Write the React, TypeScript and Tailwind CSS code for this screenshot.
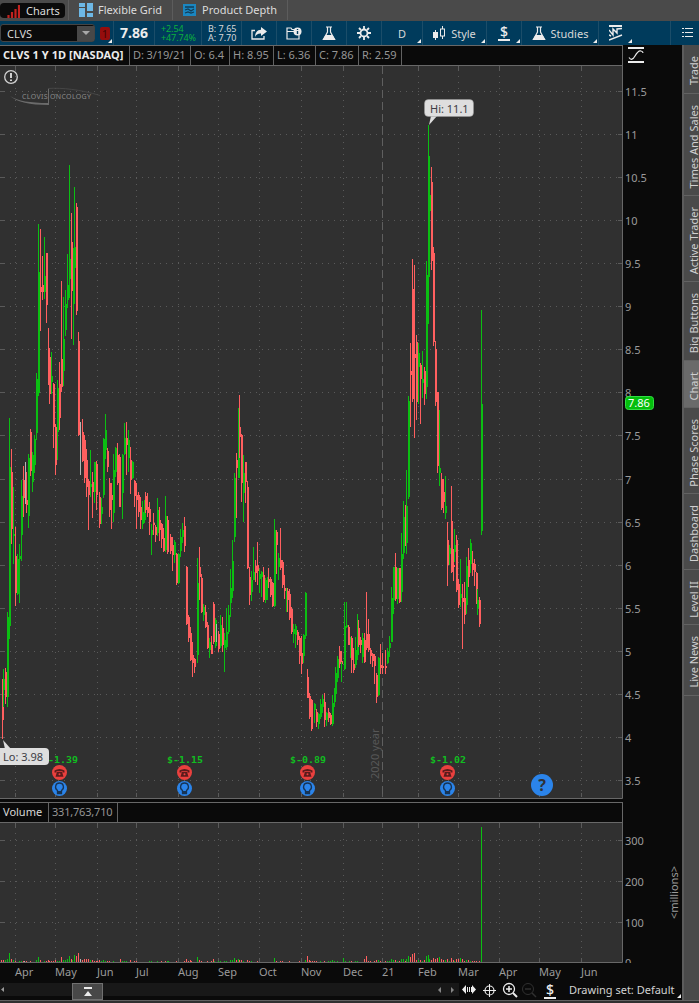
import { ReactNode } from "react"
import clsx from "clsx"

type Candle = {
  x: number
  high: number
  low: number
  top: number
  bottom: number
  color: string
}

const COLORS: Record<string, string> = { u: "#0bbf12", d: "#ff5f5f", n: "#b5b5b5" }

// direction, x, high, low and optionally the body's top and bottom
const CANDLES = `
d 2 679 739 679 720;u 3 669 707 679 690;d 5 668 704 672 697;u 7 612 707 617 697;u 9 418 639 467 626;d 11 449 544 472 529;
u 13 487 564 534 536;d 15 527 606 556 593;u 17 554 595 559 594;u 19 544 603 556 559;u 21 480 561 496 535;d 23 466 517 480 498;
n 25 462 504;d 26 472 513 500 505;u 28 454 528 458 516;d 30 429 476 432 471;u 32 452 492 455 482;u 34 435 473 439 465;
u 36 373 440 379 433;u 38 224 396 272 393;d 40 229 331 287 292;d 42 256 300 285 292;u 44 237 299 276 292;d 46 253 323 253 305;
d 48 328 385 348 384;d 49 348 404 357 394;u 51 352 394 376 382;d 53 383 448 384 427;d 55 424 475 427 465;u 57 380 460 388 432;
d 59 362 430 384 418;d 61 281 392 359 387;u 63 297 386 339 371;u 65 290 336 304 330;u 67 254 308 285 300;u 69 165 298 259 279;
d 71 213 339 242 291;u 73 248 345 250 304;u 74 187 304 247 268;d 76 203 315 207 311;d 78 332 436 341 435;n 80 422 475;
d 82 419 462 432 461;d 84 435 483 440 478;d 86 449 497 460 487;d 88 479 530 481 495;u 90 450 497 484 487;d 92 472 518 482 492;
u 94 462 503 462 492;d 96 461 510 464 495;d 97 473 495;d 99 492 528 497 524;u 101 498 524 507 514;u 103 438 498 439 495;
u 105 414 459 430 450;d 107 448 472 451 467;d 109 478 517 483 510;d 111 483 529 495 500;u 113 454 522 470 513;u 115 447 477 448 472;
d 117 443 485 455 483;d 119 454 492 457 507;u 122 454 519 455 493;u 124 423 455 438 454;d 126 422 475 438 445;u 128 430 472 440 458;
d 130 447 494 460 480;u 132 461 479 462 478;d 134 480 507 481 496;d 136 483 529 495 500;d 138 492 517 495 512;d 140 497 529 507 520;
u 142 501 529 512 524;u 144 500 523 501 520;d 145 492 513 496 510;d 147 493 517 507 513;d 149 502 535 509 522;u 151 524 555 530 535;
d 153 513 535 523 525;d 155 525 542 527 535;u 157 498 536 510 533;d 159 507 541 520 530;d 161 523 548 524 539;d 163 528 552 538 551;
u 165 496 552 516 550;d 167 516 554 520 552;d 170 534 554 537 551;d 172 537 571 545 555;u 174 540 563 542 555;d 176 553 585 554 583;
u 178 553 584 554 583;u 180 529 557 537 551;u 182 523 543 530 537;d 184 517 552 526 546;d 186 566 625 567 624;d 188 615 642 617 638;
d 190 627 661 633 660;d 192 642 677 655 663;d 194 658 673 659 667;u 197 558 663 583 655;d 199 547 600 567 577;d 201 574 613 578 612;
u 203 604 621 607 615;d 205 605 628 612 627;d 207 622 649 625 648;u 209 638 658 642 650;d 211 636 654 645 654;d 213 602 644 604 642;
u 215 618 648 620 646;n 216 624 642;d 218 631 652 634 649;u 220 615 648 625 646;d 222 617 652 628 645;u 224 633 672 640 648;
u 226 608 650 632 647;u 228 605 634 615 632;u 230 569 617 588 603;u 232 540 598 561 591;u 234 473 542 478 537;d 236 453 518 460 468;
u 238 408 478 408 478;d 239 395 458 427 437;d 241 434 502 435 483;u 243 455 522 473 493;d 245 462 503 462 482;d 247 481 569 487 568;
d 249 567 605 577 595;u 251 571 601 580 592;u 253 547 580 572 580;d 255 560 582 566 573;d 257 542 585 565 571;u 259 569 593 574 579;
u 261 571 597 572 577;d 263 567 602 575 600;u 265 578 603 580 600;u 267 577 600 578 582;d 268 568 588 579 582;d 270 577 597 579 595;
d 272 582 607 583 606;u 274 519 607 530 606;d 276 530 574 532 545;u 278 553 580 558 567;d 280 528 570 560 568;d 282 560 588 562 585;
d 284 575 599 588 591;u 286 588 612 589 610;d 287 588 612 591 600;d 289 589 620 594 618;d 291 607 634 609 632;u 293 624 643 629 634;
u 295 624 648 626 635;d 297 630 645 632 640;d 299 636 664 638 656;d 301 636 674 653 664;u 303 634 663 635 656;u 305 592 639 593 636;
d 307 669 698 677 698;d 309 693 719 696 717;d 311 699 731 700 729;u 314 703 723 704 710;d 316 709 727 712 722;u 318 713 729 714 724;
u 320 699 719 704 717;u 322 695 713 699 707;d 324 693 727 702 720;u 326 712 726 713 720;d 328 708 722 712 718;d 330 713 725 715 724;
u 332 695 726 703 724;u 334 688 707 692 702;u 335 667 699 673 694;u 337 656 682 659 678;d 339 646 668 651 664;d 341 651 673 661 664;
u 341 662 682;u 344 602 670 626 669;u 346 602 628 625 627;d 348 625 638 627 645;u 350 637 658 646 650;d 351 636 673 638 660;
d 353 648 673 664 670;u 355 637 668 650 665;u 357 614 660 621 655;d 358 620 647 628 645;d 360 637 653 640 645;u 362 633 663 638 657;
d 364 633 663 640 662;d 366 592 650 634 648;d 368 619 652 634 650;d 370 648 664 650 656;d 372 653 667 654 661;d 374 654 684 656 666;
d 376 673 703 675 697;u 378 657 696 658 695;d 380 644 674 665 668;d 382 653 674 666 668;d 385 650 674 666 668;u 387 648 664 652 663;
u 389 636 657 643 648;u 391 587 642 598 642;u 393 567 614 567 600;d 395 553 601 567 599;u 397 568 604 568 599;d 399 568 603 568 602;
u 401 533 602 554 592;u 403 501 559 517 553;d 405 505 546 510 540;u 406 470 554 506 543;u 408 396 499 401 497;d 410 343 427 371 375;
d 412 259 402 289 399;d 414 265 438 354 358;d 416 335 420 342 402;u 418 343 404 353 367;d 420 363 424 365 379;u 422 351 398 379 383;
d 424 367 405 371 394;u 426 261 399 275 387;u 428 125 324 156 277;u 429 156 277 195 211;d 431 167 270 182 261;d 433 247 346 253 342;
d 435 341 406 349 402;d 437 392 473 392 466;u 439 410 486 468 473;d 441 473 510 479 508;d 443 479 513 492 502;u 445 476 519 506 513;
d 447 522 586 540 565;u 449 545 565 548 554;d 451 486 573 521 572;d 453 549 581 565 567;u 454 529 562 545 552;d 456 535 592 540 590;
d 458 579 608 584 605;u 460 559 607 594 598;d 462 584 649 598 602;d 464 582 624 598 615;u 466 557 614 566 605;d 468 548 587 560 577;
u 470 539 573 543 564;d 472 551 576 563 570;d 474 559 586 564 572;d 476 572 604 573 604;u 477 589 615 600 608;d 479 597 627 600 624;
u 481 310 535 404 531`

const VOLUME = `d 1 2;d 3 2;u 5 2;u 7 3;u 9 9;d 11 3;u 13 2;d 15 1;u 19 1;u 21 1;d 23 1;n 24 1;d 26 1;d 30 1;u 36 2;u 38 5;d 40 2;u 44 1;d 46 1;d 48 2;d 49 1;d 51 1;d 53 1;d 55 2;
u 57 1;u 59 1;d 61 5;u 63 2;u 65 2;u 67 3;u 69 6;d 71 3;u 72 2;u 74 7;d 76 6;d 78 9;n 80 3;d 82 2;d 84 3;d 86 3;d 88 3;u 90 2;d 92 2;d 94 1;d 96 1;d 97 1;d 99 2;u 101 1;u 103 2;u 105 1;d 107 1;d 109 1;u 113 1;
d 120 3;u 122 1;u 124 1;u 126 1;d 130 2;d 134 1;d 136 1;u 149 1;u 151 1;u 157 1;d 161 1;d 165 1;u 167 1;u 168 1;d 176 1;d 184 1;d 186 3;d 188 1;d 190 2;d 191 1;u 197 5;d 199 2;d 201 1;d 207 1;d 211 1;d 213 3;u 214 1;u 218 1;
u 220 1;u 224 1;u 226 1;u 230 2;u 232 2;u 234 4;d 236 2;u 238 3;d 239 2;d 241 2;u 243 1;d 247 2;d 249 1;u 251 1;d 257 1;u 274 4;d 276 1;d 280 1;d 282 1;d 289 1;d 299 1;u 305 2;d 307 6;d 309 2;d 310 1;d 312 1;d 314 1;d 316 1;u 320 1;d 324 1;u 328 1;u 330 1;u 332 2;u 334 1;u 337 1;u 343 4;u 345 1;u 349 1;
d 351 1;u 355 1;u 357 1;d 364 3;d 366 6;d 368 1;d 370 1;d 374 1;d 376 2;u 378 2;d 380 1;d 385 1;u 387 1;u 389 1;u 391 3;u 393 2;d 395 2;u 397 1;d 399 1;u 401 3;u 403 3;d 405 1;u 406 3;u 408 6;d 410 5;d 412 8;d 414 9;d 416 2;u 418 2;d 420 2;u 422 1;d 424 2;u 426 6;u 428 7;u 429 3;
d 431 2;d 433 4;d 435 3;d 437 4;u 439 5;d 441 3;d 443 2;u 445 2;d 447 3;u 449 1;d 451 4;d 453 2;u 454 1;d 456 3;d 458 3;u 460 4;d 462 3;d 464 1;u 466 2;d 468 2;u 470 1;d 472 1;d 474 1;d 476 1;d 479 1;u 481 135`

const parseRows = (raw: string) =>
  raw
    .split(";")
    .map((row) => row.trim().split(" "))
    .filter((row) => row.length > 1)

const candles: Candle[] = parseRows(CANDLES).map(([kind, ...rest]) => {
  const [x, high, low, top, bottom] = rest.map(Number)
  return { x, high, low, top: top ?? 0, bottom: bottom ?? 0, color: COLORS[kind] }
})

const volume = parseRows(VOLUME).map(([kind, x, h]) => ({ x: Number(x), h: Number(h), color: COLORS[kind] }))

const MONTHS: [number, string][] = [
  [15, "Apr"], [55, "May"], [97, "Jun"], [136, "Jul"], [178, "Aug"], [218, "Sep"], [259, "Oct"], [301, "Nov"],
  [343, "Dec"], [382, "21"], [418, "Feb"], [458, "Mar"], [499, "Apr"], [539, "May"], [581, "Jun"],
]

const PRICES: [number, string][] = [
  [91, "11.5"], [134, "11"], [177, "10.5"], [220, "10"], [263, "9.5"], [306, "9"], [349, "8.5"], [392, "8"], [435, "7.5"],
  [479, "7"], [522, "6.5"], [565, "6"], [608, "5.5"], [651, "5"], [694, "4.5"], [737, "4"], [780, "3.5"],
]

const EARNINGS: [number, string][] = [[59, "$-1.39"], [184, "$-1.15"], [307, "$-0.89"], [447, "$-1.02"]]

const SIDE_TABS = [
  { label: "Trade", size: "h-[49px]" },
  { label: "Times And Sales", size: "h-[102px]" },
  { label: "Active Trader", size: "h-[86px]" },
  { label: "Big Buttons", size: "h-[79px]" },
  { label: "Chart", size: "h-[47px]", active: true },
  { label: "Phase Scores", size: "h-[86px]" },
  { label: "Dashboard", size: "h-[76px]" },
  { label: "Level II", size: "h-[55px]" },
  { label: "Live News", size: "h-[71px]" },
]

const Flask = () => (
  <svg width="14" height="15" viewBox="0 0 14 15" fill="none" stroke="#ececec" strokeWidth="1.2">
    <path d="M4 1h6M5.5 1v5L1.500 13.500h11L8.500 6V1" />
    <path d="M3.800 9.500h6.400l2.300 4h-11z" fill="#ececec" />
  </svg>
)

const Dollar = () => (
  <span className="flex w-3 flex-col items-center">
    <span className="text-[14px] font-medium leading-[13px] text-[#ececec]">$</span>
    <svg width="12" height="2" className="mt-px block shrink-0">
      <rect width="12" height="2" fill="#ececec" />
    </svg>
  </span>
)

const Corner = () => (
  <svg width="4" height="4" className="absolute bottom-[2px] right-px">
    <path d="M4 0v4H0z" fill="#ececec" />
  </svg>
)

const Tool = ({ size, corner, children }: { size: string; corner?: boolean; children?: ReactNode }) => (
  <div className={clsx("relative flex h-full shrink-0 items-center justify-center border-r border-[#1b4d69] text-[#d8d8d8]", size)}>
    {children}
    {corner && <Corner />}
  </div>
)

const TopTabs = () => (
  <div className="flex h-[21px] shrink-0 bg-[#4a4a4a] pb-px text-[#dcdcdc]">
    <div className="flex w-[69px] items-center border-r border-[#5c5c5c]">
      <div className="mt-px flex h-[15px] w-[65px] items-center gap-[6px] rounded-[4px] bg-[#0b0b0b] pb-px pl-[7px]">
        <svg width="13" height="13" className="mt-[2px]">
          <path d="M1.500 13V10M5 13V7M8.500 13V4M12 13V0" stroke="#c2221f" strokeWidth="2.200" />
        </svg>
        Charts
      </div>
    </div>
    <div className="flex w-[104px] items-center gap-[5px] border-r border-[#5c5c5c] pb-px pl-[10px]">
      <svg width="14" height="14" fill="#6db8e6" className="mt-px">
        <path d="M0 0h6v4H0zM0 5h6v9H0zM8 0h6v8H8zM8 10h6v4H8z" />
      </svg>
      Flexible Grid
    </div>
    <div className="flex w-[115px] items-center gap-[6px] border-r border-[#5c5c5c] pb-px pl-[10px]">
      <svg width="13" height="12">
        <rect width="13" height="12" fill="#1b86c0" />
        <path d="M2 3h9M2 6l3-1 3 2 3-2M2 9l3-1 3 1 3-1" fill="none" stroke="#123d57" strokeWidth="1.300" />
      </svg>
      Product Depth
    </div>
  </div>
)

const Toolbar = () => (
  <div className="flex h-[24px] shrink-0 items-center bg-[#003b5c]">
    <div className="flex h-[18px] w-[95px] shrink-0 items-center justify-between rounded-[3px] border border-[#444] bg-[#0b0b0b] pl-[6px] text-[#d8d8d8]">
      CLVS
      <div className="flex h-[15px] w-[17px] items-center justify-center bg-[#484848]">
        <svg width="8" height="4"><path d="M0 0h8L4 4z" fill="#a8a8a8" /></svg>
      </div>
    </div>
    <div className="relative flex h-full w-[19px] shrink-0 items-center border-r border-[#1b4d69] pl-[5px]">
      <div className="h-[13px] w-[10px] rounded-[2px] bg-[#950d0d] text-center leading-[13px] text-[#450404]">1</div>
      <Corner />
    </div>
    <Tool size="w-[41px]"><span className="text-sm font-bold text-[#ececec]">7.86</span></Tool>
    <Tool size="w-[47px]">
      <div className="w-full pb-px pl-[6px] text-[9px] leading-[9px] tracking-[-0.1px] text-[#0cb03c]"><div>+2.54</div><div>+47.74%</div></div>
    </Tool>
    <Tool size="w-[40px]">
      <div className="w-full pb-px pl-[6px] text-[9px] leading-[9px]"><div>B: 7.65</div><div>A: 7.70</div></div>
    </Tool>
    <Tool size="w-[35px]">
      <svg width="16" height="13" fill="none">
        <path d="M4 3.500H1V12h12V9" stroke="#ececec" strokeWidth="1.300" />
        <path d="M10 0l6 4.500L10 9V6.500C7 6.300 5 7.500 4 10 4 6 6 2.800 10 2.700z" fill="#ececec" />
      </svg>
    </Tool>
    <Tool size="w-[35px]">
      <svg width="16" height="13" fill="none">
        <path d="M8 2.500H6L5 1H1v11h12V8M1 4.500h7" stroke="#ececec" strokeWidth="1.200" />
        <circle cx="11.500" cy="4.500" r="4" fill="#ececec" />
        <path d="M11.500 2v1M11.500 4v3" stroke="#003b5c" strokeWidth="1.400" />
      </svg>
    </Tool>
    <Tool size="w-[35px]"><Flask /></Tool>
    <Tool size="w-[35px]">
      <svg width="14" height="14" fill="none" stroke="#ececec">
        <circle cx="7" cy="7" r="3.500" strokeWidth="1.800" />
        <path d="M7 0v3M7 11v3M0 7h3M11 7h3M2 2l2 2M10 10l2 2M12 2l-2 2M4 10l-2 2" strokeWidth="1.800" />
      </svg>
    </Tool>
    <Tool size="w-[41px]" corner>D</Tool>
    <Tool size="w-[64px]" corner>
      <svg width="12" height="15" className="mr-[6px]" stroke="#ececec" fill="none">
        <path d="M2.500 4v10M9.500 0v3M9.500 10v3" />
        <rect x="0.500" y="6.500" width="4" height="5" fill="#ececec" />
        <rect x="7.500" y="3" width="4" height="7" />
      </svg>
      Style
    </Tool>
    <Tool size="w-[35px]" corner><Dollar /></Tool>
    <Tool size="w-[77px]" corner><span className="mr-[5px]"><Flask /></span>Studies</Tool>
    <Tool size="w-[72px]">
      <div className="relative flex h-full w-full items-center pl-[10px]">
        <svg width="14" height="16" fill="none" stroke="#ececec">
          <path d="M0 1h13" strokeWidth="2" />
          <path d="M0 5l4 5V4l4 4V4l5-.5M0 15l13-5M0 10l2 1" strokeWidth="1.400" />
        </svg>
        <svg width="4" height="4" className="ml-[5px] mt-[16px]"><path d="M4 0v4H0z" fill="#ececec" /></svg>
      </div>
    </Tool>
    <svg width="12" height="10" className="ml-[11px]" fill="#ececec">
      <path d="M0 0h2v1H0zM3 0h8v1H3zM0 4h2v1H0zM3 4h8v1H3zM0 8h2v1H0zM3 8h8v1H3z" />
    </svg>
  </div>
)

const Cell = ({ size, children }: { size: string; children: ReactNode }) => (
  <div className={clsx("flex h-full shrink-0 items-center border-r border-[#626262] pb-[2px] pl-[3px] text-[#969696]", size)}>{children}</div>
)

const DottedGrid = ({ top, bottom, rows }: { top: number; bottom: number; rows: number[] }) => (
  <g stroke="#5a5a5a" shapeRendering="crispEdges">
    {MONTHS.filter(([, label]) => label !== "21" || top > 800).map(([x]) => (
      <path key={x} d={`M${x + 0.5} ${top + 10}V${bottom - 5}`} strokeDasharray="1 5" />
    ))}
    {MONTHS.map(([x]) => (
      <path key={x} d={`M${x + 0.5} ${top}v5M${x + 0.5} ${bottom}v-4`} strokeWidth="1" />
    ))}
    {rows.map((y) => (
      <g key={y}>
        <path d={`M10 ${y + 0.5}H617`} strokeDasharray="1 5" />
        <path d={`M0 ${y + 0.5}h5M618 ${y + 0.5}h5`} />
      </g>
    ))}
  </g>
)

const PriceChart = () => (
  <svg width="682" height="733" viewBox="0 66 682 733" className="block shrink-0 text-[11px]">
    <rect x="0" y="66" width="622" height="732" fill="#303030" />
    <DottedGrid top={66} bottom={797} rows={PRICES.map(([y]) => y)} />
    <path d="M382.500 66V797" stroke="#5f5f5f" strokeDasharray="8 4" />
    <text transform="translate(379 779) rotate(-90)" fill="#575757">2020 year</text>

    <path d="M10 96c8 5 20 7 38 7v2C30 105 17 102 10 96z" fill="#6b6b6b" />
    <path d="M48.500 105V88.500" stroke="#6b6b6b" fill="none" />
    <path d="M48 88.500c14-1 32 1 52 7" stroke="#464646" fill="none" />
    <text x="22" y="99" fontSize="7" fill="#8b8b8b" textLength="69">CLOVIS ONCOLOGY</text>
    <circle cx="11" cy="77" r="6.300" fill="none" stroke="#d2d2d2" strokeWidth="1.300" />
    <path d="M11 73v5M11 79.500v1.500" stroke="#e4e4e4" strokeWidth="1.800" />

    <g shapeRendering="crispEdges">
      {candles.map((c, i) => (
        <g key={i} fill={c.color}>
          <rect x={c.x} y={c.high} width="1" height={c.low - c.high} />
          {c.bottom > 0 && <rect x={c.x} y={c.top} width="2" height={c.bottom - c.top} />}
        </g>
      ))}
    </g>

    {EARNINGS.map(([x, label]) => (
      <g key={x}>
        <text
          transform={`translate(${x + 1} 763) scale(1 0.88)`}
          textAnchor="middle"
          fill="#10bd20"
          className="font-['DejaVu_Sans_Mono',monospace] text-[10px] font-bold"
        >
          {label}
        </text>
        <circle cx={x + 0.5} cy="772.500" r="7.500" fill="#ea403e" />
        <path
          d={`M${x - 4.5} 772.500v-2q5-3 10 0v2h-2v-1.500h-6v1.500zM${x - 2} 771.800h5l1.500 5h-8z`}
          fill="#5b1b1c"
        />
        <circle cx={x + 0.5} cy="774.300" r="1" fill="#ea403e" />
        <circle cx={x + 0.5} cy="788.500" r="7.500" fill="#2b84ea" />
        <path
          d={`M${x - 1.5} 790.500c-3.500-2.500-2-7.500 2-7.500s5.500 5 2 7.500v3h-4z`}
          fill="none"
          stroke="#173455"
          strokeWidth="1.300"
        />
        <path d={`M${x - 1.5} 791h4v3h-4z`} fill="#173455" />
      </g>
    ))}
    <circle cx="542" cy="785" r="11" fill="#2b84ea" />
    <text x="542" y="791" textAnchor="middle" fill="#2e3136" fontSize="16" fontWeight="700">?</text>

    <g fill="#dedede">
      <path d="M3 740l2 9h6z" />
      <rect x="-5" y="748" width="54" height="17" rx="4" />
      <path d="M429 125l2-9h6z" />
      <rect x="424.500" y="99.500" width="49" height="17" rx="4" stroke="#999" strokeWidth="0.500" />
    </g>
    <text x="3" y="761" fill="#3d3d45">Lo: 3.98</text>
    <text x="430" y="113" fill="#3d3d45">Hi: 11.1</text>

    <path d="M622.500 66V798.500H0" fill="none" stroke="#686868" />
    {PRICES.map(([y, label]) => (
      <text key={label} x="625" y={y + 5} fill="#9b9b9b">{label}</text>
    ))}
    <rect x="625.500" y="396.500" width="28" height="13" rx="3" fill="#04be0c" stroke="#32dd43" />
    <text x="628" y="407" fill="#fff">7.86</text>
  </svg>
)

const VolumeChart = () => (
  <svg width="682" height="160" viewBox="0 823 682 160" className="block shrink-0 text-[11px]">
    <rect x="0" y="823" width="622" height="139" fill="#303030" />
    <DottedGrid top={823} bottom={962} rows={[840, 881, 922]} />
    <g shapeRendering="crispEdges">
      {volume.map((v) => (
        <rect key={v.x} x={v.x} y={962 - v.h} width="1" height={v.h} fill={v.color} />
      ))}
    </g>
    <path d="M622.500 823V962.500H0" fill="none" stroke="#686868" />
    <g fill="#9b9b9b">
      <text x="625" y="845">300</text>
      <text x="625" y="886">200</text>
      <text x="625" y="927">100</text>
      <svg x="620" y="950" width="30" height="13"><text x="5" y="17">0</text></svg>
      <text transform="translate(678 919) rotate(-90)">&lt;millions&gt;</text>
      {MONTHS.map(([x, label]) => (
        <text key={x} x={x} y="976">{label}</text>
      ))}
    </g>
  </svg>
)

const BottomBar = () => (
  <div className="flex h-[17px] shrink-0 bg-[#0a0a0a] text-[#d2d2d2]">
    <div className="relative flex h-[13px] w-[459px] shrink-0 items-center justify-end gap-[10px] bg-[#181818] pr-[5px]">
      <svg width="3" height="5" className="absolute left-[1px] top-[4px]"><path d="M3 0v5L0 2.500z" fill="#999" /></svg>
      <div className="absolute left-[72px] top-0 flex h-[17px] w-[31px] items-center justify-center border border-[#707070] bg-[#484848]">
        <svg width="8" height="9" fill="#ececec"><path d="M0 0h8v2H0zM4 4l4 5H0z" /></svg>
      </div>
      <svg width="3" height="6"><path d="M3 0v6L0 3z" fill="#858585" /></svg>
      <svg width="3" height="6"><path d="M0 0v6L3 3z" fill="#858585" /></svg>
    </div>
    <svg width="14" height="10" className="ml-[3px] mt-[2px]" fill="#ececec">
      <path d="M4 0v9L0 4.500zM10 0v9l4-4.500zM5 2h1v5H5zM7 2h1v5H7zM9 2h1v5H9z" />
    </svg>
    <svg width="14" height="14" className="ml-[7px]" fill="none" stroke="#ececec">
      <circle cx="6.500" cy="7.500" r="4.500" strokeWidth="1.200" />
      <path d="M6.500 1v13M0 7.500h13" />
    </svg>
    <svg width="16" height="16" className="-mt-px ml-[5px]" fill="none" stroke="#ececec">
      <circle cx="7" cy="7" r="5.500" strokeWidth="1.300" />
      <path d="M4 7h6M7 4v6" strokeWidth="1.500" />
      <path d="M11 11l4 4" strokeWidth="2" />
    </svg>
    <svg width="16" height="16" className="-mt-px ml-[3px]" fill="none" stroke="#303030">
      <circle cx="7" cy="7" r="5.500" />
      <path d="M4 7h6M11 11l4 4" strokeWidth="1.500" />
    </svg>
    <div className="ml-[7px]"><Dollar /></div>
    <div className="relative ml-[13px] grow whitespace-nowrap leading-[14px]">
      Drawing set: Default
      <svg width="4" height="4" className="absolute right-[1px] top-[11px]"><path d="M4 0v4H0z" fill="#ececec" /></svg>
    </div>
  </div>
)

export default function App() {
  return (
    <div className="flex h-[1003px] w-[699px] flex-col overflow-hidden bg-[#303030] font-['Noto_Sans','Open_Sans',sans-serif] text-[11px] leading-none">
      <TopTabs />
      <Toolbar />
      <div className="flex h-[955px] shrink-0">
        <div className="flex w-[682px] shrink-0 flex-col bg-[#0a0a0a]">
          <div className="flex h-[21px] shrink-0">
            <div className="flex w-[623px] border-y border-r border-[#686868]">
              <Cell size="w-[130px] whitespace-nowrap tracking-[0.08px]"><b className="text-[#ececec]">CLVS 1 Y 1D [NASDAQ]</b></Cell>
              <Cell size="w-[61px] tracking-[-0.1px]">D: 3/19/21</Cell>
              <Cell size="w-[39px]">O: 6.4</Cell>
              <Cell size="w-[44px]">H: 8.95</Cell>
              <Cell size="w-[42px]">L: 6.36</Cell>
              <Cell size="w-[43px]">C: 7.86</Cell>
              <Cell size="w-[43px]">R: 2.59</Cell>
            </div>
            <svg width="16" height="17" className="ml-[5px] mt-[2px]" fill="none" stroke="#ececec">
              <path d="M0 1h16M0 15h16" strokeWidth="2" />
              <path d="M1 10.500c2 3 4 2 6-1.500s4-6 6-5q2 .5 2 2" strokeWidth="1.200" />
            </svg>
          </div>
          <PriceChart />
          <div className="mt-[3px] flex h-[21px] w-[623px] shrink-0 border-y border-r border-[#686868]">
            <Cell size="w-[49px]"><span className="text-[#d8d8d8]">Volume</span></Cell>
            <Cell size="w-[69px] tracking-[-0.2px]">331,763,710</Cell>
          </div>
          <VolumeChart />
          <BottomBar />
        </div>
        <div className="flex w-[17px] flex-col border-l-2 border-[#5c5c5c] bg-[#4a4a4a] text-[#d0d0d0]">
          {SIDE_TABS.map(({ label, size, active }) => (
            <div key={label} className={clsx("flex shrink-0 items-center justify-center border-b border-[#626262] pl-[4px] pt-[4px]", size, active && "bg-[#6a6a6a]")}>
              <span className="rotate-180 whitespace-nowrap text-[11px] leading-[14px] [writing-mode:vertical-rl]">{label}</span>
            </div>
          ))}
        </div>
      </div>
      <div className="h-[3px] border-t border-[#626262]" />
    </div>
  )
}
